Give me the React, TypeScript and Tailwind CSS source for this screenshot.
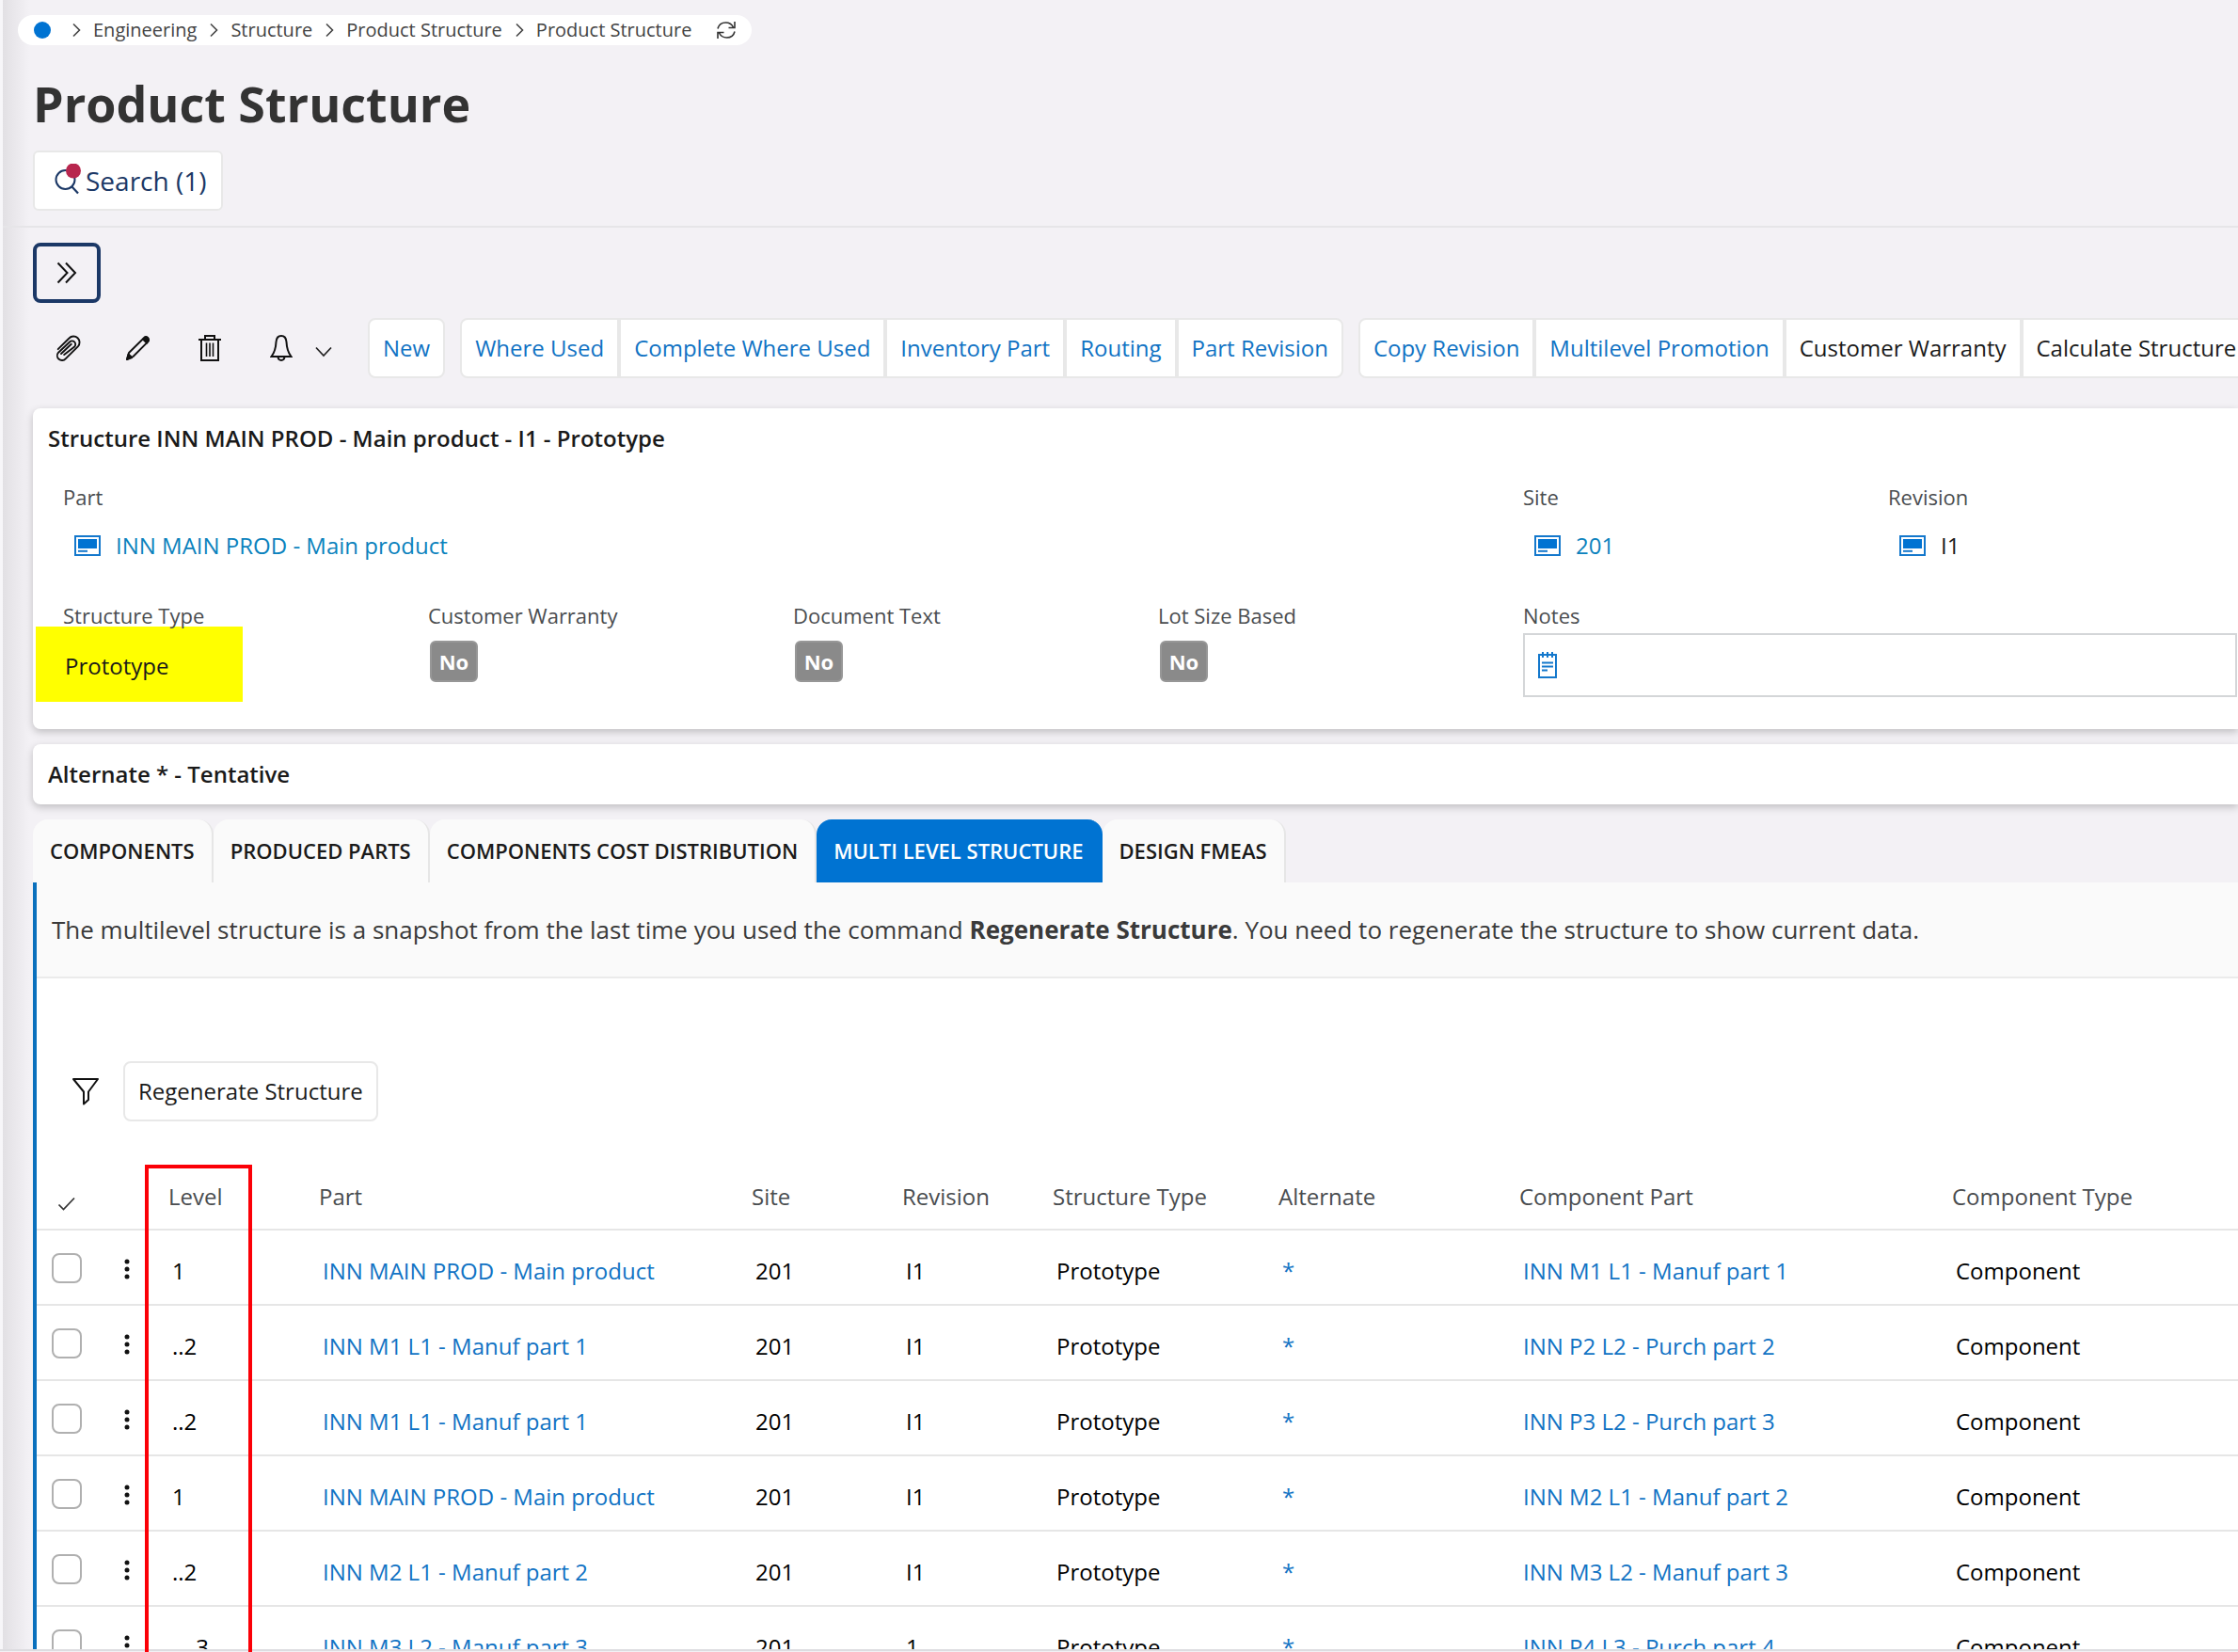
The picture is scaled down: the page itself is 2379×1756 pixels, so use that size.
import React, { useState } from 'react';

const toolbarGroups = [
  ['New'],
  ['Where Used', 'Complete Where Used', 'Inventory Part', 'Routing', 'Part Revision'],
  ['Copy Revision', 'Multilevel Promotion', 'Customer Warranty', 'Calculate Structure'],
];

const disabledLook = ['Customer Warranty', 'Calculate Structure'];

const tabs = [
  'COMPONENTS',
  'PRODUCED PARTS',
  'COMPONENTS COST DISTRIBUTION',
  'MULTI LEVEL STRUCTURE',
  'DESIGN FMEAS',
];

const rows = [
  { level: '1', part: 'INN MAIN PROD - Main product', rev: 'I1', comp: 'INN M1 L1 - Manuf part 1' },
  { level: '..2', part: 'INN M1 L1 - Manuf part 1', rev: 'I1', comp: 'INN P2 L2 - Purch part 2' },
  { level: '..2', part: 'INN M1 L1 - Manuf part 1', rev: 'I1', comp: 'INN P3 L2 - Purch part 3' },
  { level: '1', part: 'INN MAIN PROD - Main product', rev: 'I1', comp: 'INN M2 L1 - Manuf part 2' },
  { level: '..2', part: 'INN M2 L1 - Manuf part 2', rev: 'I1', comp: 'INN M3 L2 - Manuf part 3' },
  { level: '....3', part: 'INN M3 L2 - Manuf part 3', rev: '1', comp: 'INN P4 L3 - Purch part 4' },
];

function Crumb({ label }: { label: string }) {
  return (
    <li className="flex items-center gap-[13px]">
      <svg className="w-[9px] h-4" viewBox="0 0 9 16" fill="none" stroke="#444" strokeWidth="1.6">
        <path d="M1 1.5 7.5 8 1 14.5" />
      </svg>
      <a href="#" className="text-xl leading-8 text-[#434343]">{label}</a>
    </li>
  );
}

function RecordIcon() {
  return (
    <svg className="w-7 h-[22px] shrink-0" viewBox="0 0 28 22">
      <rect x="1" y="1" width="26" height="20" fill="#fff" stroke="#1478cc" strokeWidth="2" />
      <rect x="4" y="4" width="20" height="10" fill="#0073d2" />
      <path d="M4 16.8h10" stroke="#1478cc" strokeWidth="2" />
    </svg>
  );
}

function Field({ label, className = '', children }: { label: string; className?: string; children: React.ReactNode }) {
  return (
    <div className={`pr-[17px] ${className}`}>
      <div className="relative z-10 text-[22px] leading-7 text-[#4a4d50]">{label}</div>
      {children}
    </div>
  );
}

function NoBadge() {
  return (
    <div className="mt-[13px] ml-[2px] w-[51px] h-11 flex items-center justify-center rounded-md border-2 border-[#979797] bg-[#8a8a8a] text-[22px] font-bold text-white">
      No
    </div>
  );
}

export default function App() {
  const [activeTab, setActiveTab] = useState('MULTI LEVEL STRUCTURE');

  return (
    <div className="relative h-screen overflow-hidden bg-[#f3f1f5] text-[#1a1a1a] font-['Open_Sans',sans-serif]">
      {/* Shadow cast by the side menu */}
      <div className="absolute inset-y-0 left-0 w-[3px] bg-[#f7f6f9]" />
      <div className="absolute inset-y-0 left-[3px] w-7 bg-linear-to-r from-[#e2e0e4] to-[#f3f1f5]" />

      <div className="relative">
        <header className="pt-4 pb-4 ml-[3px] border-b-2 border-[#e6e5e8]">
          <nav aria-label="Breadcrumb" className="ml-4 w-fit flex items-center rounded-full bg-white pl-[17px] pr-4">
            <span className="w-[18px] h-[18px] rounded-full bg-[#0073d2]" />
            <ol className="ml-[23px] flex items-center gap-[14px]">
              <Crumb label="Engineering" />
              <Crumb label="Structure" />
              <Crumb label="Product Structure" />
              <Crumb label="Product Structure" />
            </ol>
            <button type="button" aria-label="Refresh" className="ml-[26px]">
              <svg className="w-[22px] h-5" viewBox="0 0 22 20" fill="none" stroke="#333" strokeWidth="1.6">
                <path d="M2 8.5C3 4.5 6.500 2 10.500 2c3.500 0 6.500 2 8 5M20 1v6.500h-6.500" />
                <path d="M20 11.500c-1 4-4.500 6.500-8.500 6.500-3.500 0-6.500-2-8-5M2 19v-6.500h6.500" />
              </svg>
            </button>
          </nav>

          <h1 className="mt-[30px] ml-8 text-[52px] leading-[64px] font-bold text-[#333]">Product Structure</h1>

          <button
            type="button"
            className="mt-[18px] ml-8 h-16 flex items-center rounded-md border-2 border-[#e8e8e8] bg-white pl-5 pr-4 text-[28px] text-[#1b3866]"
          >
            <svg className="w-[34px] h-9" viewBox="0 0 34 36" fill="none">
              <circle cx="12.500" cy="17" r="10" stroke="#1b3866" strokeWidth="2" />
              <path d="m19.500 24.500 6.500 7" stroke="#1b3866" strokeWidth="2.200" />
              <circle cx="21" cy="7.500" r="8" fill="#b8264e" />
            </svg>
            Search (1)
          </button>
        </header>

        <main className="pl-[35px]">
          <button
            type="button"
            aria-label="Expand"
            className="mt-4 w-[72px] h-16 flex items-center justify-center rounded-lg border-4 border-[#1b3866]"
          >
            <svg className="w-[22px] h-6" viewBox="0 0 22 24" fill="none" stroke="#111" strokeWidth="2">
              <path d="m1.500 1.500 10 10.500-10 10.500M10 1.500 20 12 10 22.500" />
            </svg>
          </button>

          {/* Command bar */}
          <div className="mt-4 h-16 flex items-center">
            <div className="ml-6 w-[332px] flex items-center shrink-0">
              <button type="button" aria-label="Attachments">
                <svg className="w-7 h-[30px]" viewBox="0 0 28 30" fill="none" stroke="#111" strokeWidth="1.900" strokeLinecap="round">
                  <path d="M2.700 16.200 14.500 4.500a6.400 6.400 0 0 1 9.300 8.800L10.700 26.300a5 5 0 0 1-7.600-6.600L15 8.500a3.600 3.600 0 0 1 5.200 5L9.200 22.100M6 21 16.800 10.800" />
                </svg>
              </button>
              <button type="button" aria-label="Edit" className="ml-[46px]">
                <svg className="w-7 h-7" viewBox="0 0 28 28" fill="none" stroke="#111" strokeWidth="1.900" strokeLinejoin="round">
                  <path d="M2 26 4 19 20 3.200c1.300-1.300 3-1.300 4.200-.1s1.200 2.900-.1 4.200L8.500 23z" />
                  <path d="m19 4.500 4 4.200 2-2.700-.8-2.800-2.800-.8zM2 26l1.500-5.500 3.800 3.500z" fill="#111" />
                </svg>
              </button>
              <button type="button" aria-label="Delete" className="ml-[50px]">
                <svg className="w-6 h-[30px]" viewBox="0 0 24 30" fill="none" stroke="#111" strokeWidth="2">
                  <path d="M0 6h24M7 6V2h10v4M3 7v21h18V7" />
                  <path d="M8.500 9.500V24M12 9.500V24M15.500 9.500V24" strokeWidth="1.600" />
                </svg>
              </button>
              <button type="button" aria-label="Notifications" className="ml-[52px] flex items-center">
                <svg className="w-6 h-[30px]" viewBox="0 0 24 30" fill="none" stroke="#111" strokeWidth="2">
                  <path d="M12 2C8.500 2 6.800 4.500 6.500 8.500 6.200 15 5 19.500 1.500 24h21C19 19.500 17.800 15 17.500 8.500 17.200 4.500 15.500 2 12 2Z" />
                  <path d="M8.500 24.500c.3 2.500 1.500 3.500 3.500 3.500s3.200-1 3.500-3.500" />
                </svg>
                <svg className="ml-6 mt-2 w-[18px] h-3" viewBox="0 0 18 12" fill="none" stroke="#222" strokeWidth="1.700">
                  <path d="m1 1.500 8 8.500 8-8.500" />
                </svg>
              </button>
            </div>
            {toolbarGroups.map((group) => (
              <div key={group[0]} className="mr-4 flex shrink-0">
                {group.map((name) => (
                  <button
                    key={name}
                    type="button"
                    className={`h-16 border-2 border-[#e8e8e8] bg-white px-[14px] text-2xl whitespace-nowrap first:rounded-l-lg last:rounded-r-lg ${
                      disabledLook.includes(name) ? 'text-[#1a1a1a]' : 'text-[#1173c4]'
                    }`}
                  >
                    {name}
                  </button>
                ))}
              </div>
            ))}
          </div>

          {/* Structure header */}
          <section className="mt-8 rounded-l-lg bg-white pt-4 pb-[34px] shadow-[0_3px_8px_rgba(0,0,0,0.22)]">
            <h2 className="pl-4 text-2xl leading-8 font-semibold">Structure INN MAIN PROD - Main product - I1 - Prototype</h2>
            <div className="mt-8 ml-8 -mr-4 grid grid-cols-6 gap-y-11">
              <Field label="Part" className="col-span-4">
                <div className="mt-[22px] pl-3 flex items-center gap-4">
                  <RecordIcon />
                  <a href="#" className="text-2xl leading-8 text-[#0b82bd]">INN MAIN PROD - Main product</a>
                </div>
              </Field>
              <Field label="Site">
                <div className="mt-[22px] pl-3 flex items-center gap-4">
                  <RecordIcon />
                  <a href="#" className="text-2xl leading-8 text-[#0b82bd]">201</a>
                </div>
              </Field>
              <Field label="Revision">
                <div className="mt-[22px] pl-3 flex items-center gap-4">
                  <RecordIcon />
                  <span className="text-2xl leading-8">I1</span>
                </div>
              </Field>
              <Field label="Structure Type">
                <div className="relative mt-6 pl-[2px] text-2xl leading-8">
                  <span className="absolute -left-[29px] -top-[26px] w-[220px] h-20 bg-[#ffff00]" />
                  <span className="relative">Prototype</span>
                </div>
              </Field>
              <Field label="Customer Warranty"><NoBadge /></Field>
              <Field label="Document Text"><NoBadge /></Field>
              <Field label="Lot Size Based"><NoBadge /></Field>
              <Field label="Notes" className="col-span-2">
                <div className="mt-[5px] h-[68px] flex items-center border-2 border-[#d4d6d8] pl-[14px]">
                  <svg className="w-5 h-[30px]" viewBox="0 0 20 30" fill="none" stroke="#1478cc" strokeWidth="2">
                    <path d="M1 4h18v24H1zM5 1v6M10 1v6M15 1v6M4 12.500h12M4 16.500h12M4 20.500h6" />
                  </svg>
                  <input aria-label="Notes" className="ml-2 flex-1 text-2xl outline-none" />
                </div>
              </Field>
            </div>
          </section>

          <section className="mt-4 rounded-l-lg bg-white py-4 pl-4 shadow-[0_3px_8px_rgba(0,0,0,0.22)]">
            <h2 className="text-2xl leading-8 font-semibold">Alternate * - Tentative</h2>
          </section>

          <div role="tablist" className="mt-4 flex">
            {tabs.map((tab) => (
              <button
                key={tab}
                type="button"
                role="tab"
                aria-selected={tab === activeTab}
                onClick={() => setActiveTab(tab)}
                className={`h-[67px] rounded-t-2xl border-r-2 px-[18px] text-[22px] font-semibold whitespace-nowrap ${
                  tab === activeTab ? 'bg-[#0073d2] border-[#0073d2] text-white' : 'bg-[#fafafa] border-[#e6e6e6]'
                }`}
              >
                {tab}
              </button>
            ))}
          </div>

          <div className="border-l-4 border-[#0a70bd] bg-white">
            <p className="border-b-2 border-[#ebebeb] bg-[#fafafa] py-8 pl-4 text-[26px] leading-9 text-[#3a3a3a]">
              The multilevel structure is a snapshot from the last time you used the command <b>Regenerate Structure</b>. You need to
              regenerate the structure to show current data.
            </p>

            <div className="mt-[88px] pl-[37px] flex items-center">
              <button type="button" aria-label="Filter">
                <svg className="w-[30px] h-[30px]" viewBox="0 0 30 30" fill="none" stroke="#111" strokeWidth="2" strokeLinejoin="round">
                  <path d="M2 2h26L18 15.500V24l-5 4.500v-13z" />
                </svg>
              </button>
              <button type="button" className="ml-[25px] h-16 rounded-lg border-2 border-[#e8e8e8] bg-white px-[14px] text-2xl">
                Regenerate Structure
              </button>
            </div>

            <div className="relative mt-12">
              <table className="w-full table-fixed border-separate border-spacing-0 text-2xl leading-8 whitespace-nowrap [&_td]:border-b-2 [&_td]:border-[#e6e6e6] [&_td]:pt-[27px] [&_td]:pb-[19px] [&_th]:border-b-2 [&_th]:border-[#e6e6e6] [&_th]:pt-4 [&_th]:pb-[18px]">
                <colgroup>
                  <col className="w-[76px]" />
                  <col className="w-16" />
                  <col className="w-40" />
                  <col className="w-[460px]" />
                  <col className="w-40" />
                  <col className="w-40" />
                  <col className="w-60" />
                  <col className="w-64" />
                  <col className="w-[460px]" />
                  <col />
                </colgroup>
                <thead>
                  <tr className="text-left text-[#4a4d50] [&_th]:font-normal">
                    <th aria-label="Select">
                      <svg className="ml-[22px] mt-4 w-5 h-4" viewBox="0 0 20 16" fill="none" stroke="#333" strokeWidth="1.700">
                        <path d="m1.500 8.500 5 5L18 1.500" />
                      </svg>
                    </th>
                    <th aria-label="Row menu" />
                    <th>Level</th>
                    <th>Part</th>
                    <th>Site</th>
                    <th>Revision</th>
                    <th>Structure Type</th>
                    <th>Alternate</th>
                    <th>Component Part</th>
                    <th>Component Type</th>
                  </tr>
                </thead>
                <tbody className="text-black [&_a]:text-[#1173c4] [&_td]:pl-1">
                  {rows.map((row, i) => (
                    <tr key={i}>
                      <td className="align-top">
                        <input
                          type="checkbox"
                          aria-label={`Select row ${i + 1}`}
                          className="block ml-3 -mt-[3px] w-8 h-8 appearance-none rounded-lg border-2 border-[#b0b0b0] bg-white checked:bg-[#0073d2]"
                        />
                      </td>
                      <td className="align-top">
                        <button type="button" aria-label="Row menu" className="mt-[2px] ml-3 block">
                          <svg className="w-2 h-6" viewBox="0 0 8 24" fill="#111">
                            <circle cx="4" cy="4" r="2.500" />
                            <circle cx="4" cy="12" r="2.500" />
                            <circle cx="4" cy="20" r="2.500" />
                          </svg>
                        </button>
                      </td>
                      <td>{row.level}</td>
                      <td><a href="#">{row.part}</a></td>
                      <td>201</td>
                      <td>{row.rev}</td>
                      <td>Prototype</td>
                      <td><a href="#">*</a></td>
                      <td><a href="#">{row.comp}</a></td>
                      <td>Component</td>
                    </tr>
                  ))}
                </tbody>
              </table>
              {/* Marks the Level column */}
              <div className="absolute z-20 left-[115px] -top-[2px] bottom-0 w-[114px] border-4 border-[#fb0007] pointer-events-none" />
            </div>
          </div>
        </main>
      </div>

      <div className="absolute z-10 inset-x-0 bottom-0 h-[3px] border-t-2 border-[#dddce0] bg-[#f3f1f5]" />
    </div>
  );
}
